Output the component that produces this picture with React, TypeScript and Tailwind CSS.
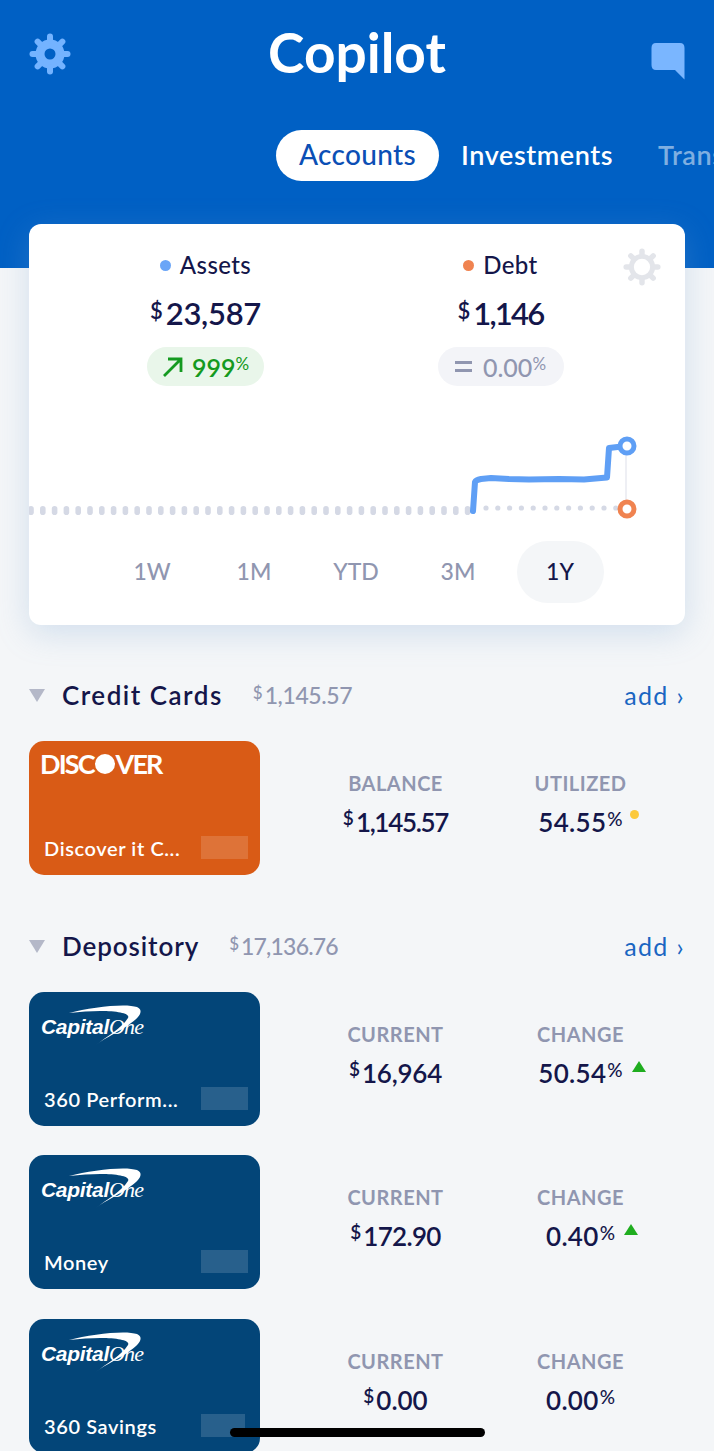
const NAVY = "text-[#14164a]";

function Gear({ size, color, ring, teeth, hole }: { size: number; color: string; ring: number; teeth: number; hole: number }) {
  const angles = [0, 45, 90, 135, 180, 225, 270, 315];
  return (
    <svg width={size} height={size} viewBox="0 0 42 42" fill="none" className="block">
      <circle cx="21" cy="21" r={hole + ring / 2} stroke={color} strokeWidth={ring} />
      {angles.map((a) => (
        <line key={a} x1="21" y1="8" x2="21" y2="3.5" stroke={color} strokeWidth={teeth} strokeLinecap="round" transform={`rotate(${a} 21 21)`} />
      ))}
    </svg>
  );
}

function Money({ value, big, track }: { value: string; big?: boolean; track: string }) {
  return (
    <div className={`flex items-start justify-center font-semibold ${NAVY}`}>
      <span className={big ? "text-[22px] leading-[28px] mr-[3px] mt-[3px]" : "text-[19px] leading-[24px] mr-[2px] mt-[1px]"}>$</span>
      <span className={`${big ? "text-[31px] leading-[38px]" : "text-[26px] leading-[34px]"} ${track}`}>{value}</span>
    </div>
  );
}

function Stat({ label, value, track = "", money, mark }: { label: string; value: string; track?: string; money?: boolean; mark?: "up" | "dot" }) {
  return (
    <div className="w-[185px] flex flex-col items-center">
      <div className="text-[20px] leading-[26px] font-bold text-[#9096b0] tracking-[0.5px]">{label}</div>
      <div className="mt-[9px] h-[34px] flex items-start">
        {money ? (
          <Money value={value} track={track} />
        ) : (
          <div className={`relative flex items-start font-semibold ${NAVY}`}>
            <span className="text-[26px] leading-[34px] tracking-[0.3px]">{value}</span>
            <span className="text-[19px] leading-[24px] ml-[1px] mt-[2px] font-medium">%</span>
            {mark === "up" && (
              <span className="absolute left-full top-[5px] ml-[9px] w-0 h-0 border-l-[7px] border-r-[7px] border-b-[11px] border-l-transparent border-r-transparent border-b-[#1fad1f]" />
            )}
            {mark === "dot" && <span className="absolute left-full top-[5px] ml-[7px] w-[9px] h-[9px] rounded-full bg-[#fcc93c]" />}
          </div>
        )}
      </div>
    </div>
  );
}

function CapitalOne() {
  return (
    <div className="relative w-[106px] h-[42px]">
      <svg className="absolute left-0 top-0" width="106" height="42" viewBox="0 0 106 42" fill="white">
        <path d="M28 8 C50 2 85 -2 96 2 C103 5 99 12 90 18 C80 26 65 32 55 40 C66 31 80 24 87 13 C91 6 60 4 28 8 Z" />
      </svg>
      <div className="absolute left-0 top-[10px] flex items-baseline text-white leading-[24px]">
        <span className="text-[21px] font-bold italic font-['Liberation_Sans',sans-serif] tracking-[-0.3px]">Capital</span>
        <span className="text-[22px] italic font-['Liberation_Serif',serif] tracking-[-0.8px]">One</span>
      </div>
    </div>
  );
}

function Discover() {
  return (
    <div className="flex items-center text-white text-[27px] leading-[32px] font-bold tracking-[-1.9px]">
      <span>DISC</span>
      <span className="w-[20px] h-[20px] rounded-full bg-white mx-[1px]" />
      <span>VER</span>
    </div>
  );
}

function BankCard({ name, kind, maskW = 47 }: { name: string; kind: "discover" | "capital"; maskW?: number }) {
  const bg = kind === "discover" ? "bg-[#d95b16]" : "bg-[#034578]";
  return (
    <div className={`w-[231px] h-[134px] shrink-0 rounded-[15px] ${bg} flex flex-col justify-between`}>
      <div className={kind === "discover" ? "pl-[11px] pt-[7px]" : "pl-[12px] pt-[13px]"}>
        {kind === "discover" ? <Discover /> : <CapitalOne />}
      </div>
      <div className="flex items-center justify-between pl-[15px] pb-[15px]">
        <span className="text-white text-[20px] leading-[23px] font-semibold tracking-[0.6px] whitespace-nowrap mt-[2px]">{name}</span>
        <span className="h-[23px] bg-white/15" style={{ width: maskW, marginRight: 59 - maskW }} />
      </div>
    </div>
  );
}

function Row({ card, a, b }: { card: React.ReactNode; a: React.ReactNode; b: React.ReactNode }) {
  return (
    <div className="flex items-start">
      {card}
      <div className="flex ml-[43px] pt-[29px]">
        {a}
        {b}
      </div>
    </div>
  );
}

function SectionHeader({ title, total, titleTrack, totalTrack }: { title: string; total: string; titleTrack: string; totalTrack: string }) {
  return (
    <div className="flex items-center h-[30px] justify-between">
      <div className="flex items-center">
        <span className="w-0 h-0 border-l-[8px] border-r-[8px] border-t-[13px] border-l-transparent border-r-transparent border-t-[#b4b8c8] mr-[17px]" />
        <span className={`text-[26px] leading-[30px] font-semibold ${titleTrack} ${NAVY}`}>{title}</span>
        <span className="flex items-start text-[#9096b0] font-medium ml-[30px]">
          <span className="text-[17px] leading-[24px] mr-[2px] mt-[1px]">$</span>
          <span className={`text-[23px] leading-[30px] ${totalTrack}`}>{total}</span>
        </span>
      </div>
      <span className="text-[25px] leading-[30px] text-[#1a66c2] tracking-[1.4px]">add ›</span>
    </div>
  );
}

function Chart() {
  const big = Array.from({ length: 38 }, (_, i) => 2 + i * 11.8);
  const small = Array.from({ length: 12 }, (_, i) => 457 + i * 11.8);
  return (
    <svg width="656" height="110" viewBox="0 0 656 110" fill="none" className="block">
      {big.map((x) => (
        <rect key={x} x={x - 2.8} y="82" width="5.6" height="9" rx="2.8" fill="#d5d9e5" />
      ))}
      {small.map((x) => (
        <circle key={x} cx={x} cy="84" r="2.6" fill="#d5d9e5" />
      ))}
      <line x1="597" y1="24" x2="597" y2="84" stroke="#e8eaf0" strokeWidth="1.5" />
      <path
        d="M444 87 L446 58 Q447 56 452 55 L462 54 L480 55 L500 55.5 L530 55 L555 55.5 L578 53.5 L580 24 L597 22"
        stroke="#5f9ff5"
        strokeWidth="6"
        strokeLinejoin="round"
        strokeLinecap="round"
      />
      <circle cx="598" cy="22" r="7" fill="white" stroke="#5f9ff5" strokeWidth="5" />
      <circle cx="598" cy="85" r="7" fill="white" stroke="#f08350" strokeWidth="5" />
    </svg>
  );
}

export default function App() {
  const ranges = ["1W", "1M", "YTD", "3M", "1Y"];
  return (
    <div className="relative w-[714px] h-[1451px] overflow-hidden bg-[#f4f6f8] font-['Lato',sans-serif]">
      <div className="h-[268px] bg-[#0060c4] overflow-hidden">
        <div className="grid grid-cols-[1fr_auto_1fr] items-start px-[29px] pt-[24px] h-[90px]">
          <div className="mt-[9px] justify-self-start"><Gear size={42} color="#74b3ff" ring={9} teeth={6} hole={5.5} /></div>
          <div className="text-white text-[55px] leading-[56px] font-bold">Copilot</div>
          <svg width="34" height="37" viewBox="0 0 34 37" fill="#7ab6ff" className="justify-self-end mt-[19px]">
            <path d="M5 0 H29 Q33.5 0 33.5 5 V36.5 L24 27 H5 Q0.5 27 0.5 22 V5 Q0.5 0 5 0 Z" />
          </svg>
        </div>
        <div className="flex items-center pl-[276px] mt-[40px] whitespace-nowrap">
          <div className="w-[163px] h-[51px] pb-[4px] shrink-0 rounded-full bg-white flex items-center justify-center text-[28px] font-medium text-[#0b4fb5] tracking-[0.3px]">Accounts</div>
          <div className="ml-[22px] pb-[1px] shrink-0 text-[27px] font-semibold text-white tracking-[0.6px]">Investments</div>
          <div className="ml-[45px] pb-[1px] shrink-0 text-[27px] font-semibold text-white/50 tracking-[0.6px]">Transactions</div>
        </div>
      </div>

      <div className="relative mx-[29px] mt-[-44px] h-[401px] rounded-[12px] bg-white shadow-[0_8px_32px_rgba(120,160,210,0.28)] flex flex-col">
        <div className="absolute right-[24px] top-[24px]">
          <Gear size={38} color="#e3e5ea" ring={5.5} teeth={6} hole={9} />
        </div>
        <div className="flex pt-[27px] pl-[29px]">
          <div className="w-[295px] flex flex-col items-center">
            <div className={`flex items-center text-[24px] leading-[28px] font-medium tracking-[0.4px] ${NAVY}`}>
              <span className="w-[11px] h-[11px] rounded-full bg-[#6aa5f7] mr-[9px]" />Assets
            </div>
            <div className="mt-[15px]"><Money value="23,587" big track="tracking-[-0.3px]" /></div>
            <div className="mt-[15px] h-[39px] w-[117px] rounded-full bg-[#e9f6ea] flex items-center justify-center text-[#149a20]">
              <svg width="22" height="22" viewBox="0 0 22 22" fill="none" stroke="#149a20" strokeWidth="2.8" className="mr-[8px]">
                <path d="M2 20 L19 3 M6 3 H19 V16" />
              </svg>
              <span className="text-[25px] leading-[30px] font-semibold">999</span>
              <span className="text-[17px] leading-[24px] self-start mt-[5px]">%</span>
            </div>
          </div>
          <div className="w-[295px] flex flex-col items-center">
            <div className={`flex items-center text-[24px] leading-[28px] font-medium tracking-[0.4px] ${NAVY}`}>
              <span className="w-[11px] h-[11px] rounded-full bg-[#f08350] mr-[9px]" />Debt
            </div>
            <div className="mt-[15px]"><Money value="1,146" big track="tracking-[-1.8px]" /></div>
            <div className="mt-[15px] h-[39px] w-[126px] rounded-full bg-[#f3f4f8] flex items-center justify-center text-[#9096b0]">
              <span className="flex flex-col gap-[5px] mr-[11px]">
                <span className="block w-[17px] h-[3px] bg-[#9096b0]" />
                <span className="block w-[17px] h-[3px] bg-[#9096b0]" />
              </span>
              <span className="text-[25px] leading-[30px] font-medium">0.00</span>
              <span className="text-[17px] leading-[24px] self-start mt-[5px]">%</span>
            </div>
          </div>
        </div>
        <div className="mt-[38px]"><Chart /></div>
        <div className="flex pl-[72px] mt-[7px]">
          {ranges.map((r) => (
            <div key={r} className="w-[102px] h-[62px] flex items-center justify-center">
              <div className={`h-[62px] w-[87px] pb-[2px] rounded-full flex items-center justify-center text-[23px] font-medium ${r === "1Y" ? "bg-[#f4f6f8] text-[#14164a]" : "text-[#9096b0]"}`}>{r}</div>
            </div>
          ))}
        </div>
      </div>

      <div className="px-[29px] mt-[55px]">
        <SectionHeader title="Credit Cards" total="1,145.57" titleTrack="tracking-[1.5px]" totalTrack="tracking-[-0.4px]" />
        <div className="mt-[31px]">
          <Row
            card={<BankCard kind="discover" name="Discover it C..." />}
            a={<Stat label="BALANCE" value="1,145.57" track="tracking-[-1.3px]" money />}
            b={<Stat label="UTILIZED" value="54.55" mark="dot" />}
          />
        </div>
        <div className="mt-[56px]">
          <SectionHeader title="Depository" total="17,136.76" titleTrack="tracking-[0.9px]" totalTrack="tracking-[-0.8px]" />
        </div>
        <div className="mt-[31px] flex flex-col gap-[29px]">
          <Row
            card={<BankCard kind="capital" name="360 Perform..." />}
            a={<Stat label="CURRENT" value="16,964" track="tracking-[-0.2px]" money />}
            b={<Stat label="CHANGE" value="50.54" mark="up" />}
          />
          <Row
            card={<BankCard kind="capital" name="Money" />}
            a={<Stat label="CURRENT" value="172.90" track="tracking-[-0.7px]" money />}
            b={<Stat label="CHANGE" value="0.40" mark="up" />}
          />
          <div className="mt-[1px]">
            <Row
              card={<BankCard kind="capital" name="360 Savings" maskW={44} />}
              a={<Stat label="CURRENT" value="0.00" money track="" />}
              b={<Stat label="CHANGE" value="0.00" />}
            />
          </div>
        </div>
      </div>

      <div className="absolute left-[230px] top-[1428px] w-[255px] h-[9px] rounded-full bg-black" />
    </div>
  );
}
